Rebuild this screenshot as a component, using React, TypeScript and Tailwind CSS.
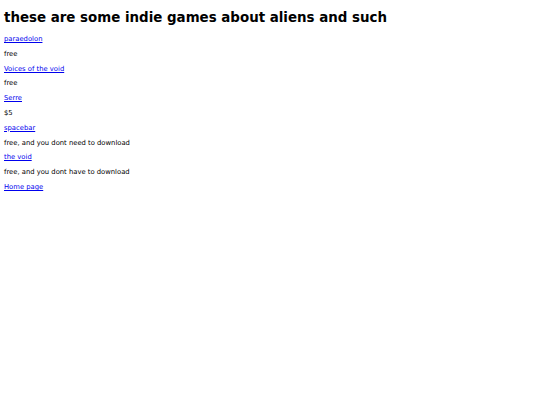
const games = [
  { name: "paraedolon", price: "free" },
  { name: "Voices of the void", price: "free" },
  { name: "Serre", price: "$5" },
  { name: "spacebar", price: "free, and you dont need to download" },
  { name: "the void", price: "free, and you dont have to download" },
];

export default function App() {
  return (
    <div className="min-h-[405px] bg-white px-[4px] pt-[2px] font-['DejaVu_Sans',sans-serif] text-[6.8px] leading-[1.164] text-black">
      <h1 className="mt-[7.6px] mb-[10.8px] text-[13.4px] font-bold leading-[1.164]">
        these are some indie games about aliens and such
      </h1>
      {games.map((g) => (
        <div key={g.name}>
          <p className="my-[6.9px]">
            <a href="#" className="text-[#0000ee] underline">
              {g.name}
            </a>
          </p>
          <p className="my-[6.9px]">{g.price}</p>
        </div>
      ))}
      <p className="my-[6.9px]">
        <a href="#" className="text-[#0000ee] underline">
          Home page
        </a>
      </p>
    </div>
  );
}
